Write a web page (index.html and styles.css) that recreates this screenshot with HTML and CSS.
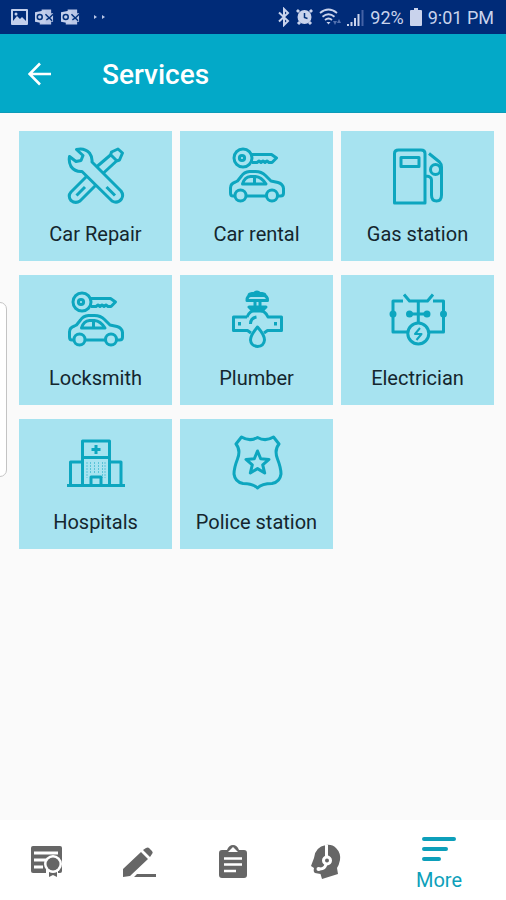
FILE: index.html
```html
<!DOCTYPE html>
<html lang="en">
<head>
<meta charset="utf-8">
<meta name="viewport" content="width=device-width, initial-scale=1">
<title>Services</title>
<link rel="stylesheet" href="styles.css">
</head>
<body>
<svg class="defs" aria-hidden="true">
  <symbol id="mail" viewBox="0 0 20 18">
    <path d="M7 1h10v4H7zM10 5h9v9h-9zM5 14h12v3H5z" fill="#b9c6e6"/>
    <path d="M0 4l11-2v14L0 14z" fill="#c3cfeb"/>
    <circle cx="5" cy="9" r="2.6" fill="none" stroke="#02307a" stroke-width="1.6"/>
    <path d="M11 6l4 4 4-4M12 12l3-2 3 3" fill="none" stroke="#02307a" stroke-width="1.5"/>
  </symbol>
  <symbol id="car-key" viewBox="0 0 60 60">
    <circle cx="16" cy="12" r="9"/>
    <circle cx="15" cy="12" r="2.6"/>
    <path d="M25 8.5h19.500l5 3.500-4.500 4.500h-3l-2-1.500-2 1.500-2-1.500-2 1.500-2-1.500-2 1.500h-5"/>
    <path d="M8 50H6q-2.500 0-2.500-3v-5q0-4.500 5-6l2-1 4-5q2.500-4 8-4.500h6q6 0 10 4l5.500 5.500 7 1.500q5 1.500 5.500 6v4.500q0 3-3 3h-2.500M19 50h20.500"/>
    <path d="M15.500 38q2-7 8-7.500h5q6 .5 10.500 7.500zM27.500 31v7"/>
    <circle cx="13.500" cy="49.500" r="5.500"/>
    <circle cx="45" cy="49.500" r="5.500"/>
  </symbol>
</svg>

<div class="status">
  <div class="status-group notices">
    <svg width="17" height="16" viewBox="0 0 17 16" aria-hidden="true"><path fill="#c3cfeb" fill-rule="evenodd" d="M1 0h15q1 0 1 1v14q0 1-1 1H1q-1 0-1-1V1q0-1 1-1zM2 2v10l4-5 3 3 2-2 4 4V2z"/><circle cx="5" cy="5" r="1.500" fill="#c3cfeb"/></svg>
    <svg width="19" height="18" aria-hidden="true"><use href="#mail"/></svg>
    <svg width="19" height="18" aria-hidden="true"><use href="#mail"/></svg>
    <svg class="dots" width="12" height="4" viewBox="0 0 12 4" aria-hidden="true"><path d="M1 0l3 2-3 2zM9 0l3 2-3 2z" fill="#b9c6e6"/></svg>
  </div>
  <div class="status-group system">
    <svg width="12" height="20" viewBox="0 0 12 20" aria-hidden="true"><path d="M1 5.500l9 8.500-4 4V2l4 4-9 8.500" fill="none" stroke="#c9d3ec" stroke-width="2"/></svg>
    <svg width="17" height="18" viewBox="0 0 17 18" aria-hidden="true"><path d="M3 2l-2 2M14 2l2 2M4 14l-2 2M13 14l2 2" stroke="#c9d3ec" stroke-width="3"/><circle cx="8.500" cy="9" r="7" fill="#c9d3ec"/><path d="M8.500 5v4.500l3 1" fill="none" stroke="#02307a" stroke-width="1.500"/></svg>
    <svg width="22" height="18" viewBox="0 0 22 18" aria-hidden="true"><g fill="none" stroke="#c9d3ec" stroke-width="1.800"><path d="M1 5q8.500-7 17 0M3.500 8.700q6-5 12 0M6 12q3.500-3 7 0"/></g><path d="M9.500 16.500l-2-2.500h4z" fill="#c9d3ec"/><path d="M14 13l2 4 2-4zM18 15l2-4 2 4z" fill="#5371ae"/></svg>
    <svg width="17" height="17" viewBox="0 0 17 17" aria-hidden="true"><path d="M1 17v-2M4.500 17v-4M8 17V9M11.500 17V5" stroke="#c9d3ec" stroke-width="2"/><path d="M15.500 17V1" stroke="#4462a5" stroke-width="2"/></svg>
    <span>92%</span>
    <svg class="battery" width="12" height="18" viewBox="0 0 12 18" aria-hidden="true"><path d="M4 0h4v2h3q1 0 1 1v14q0 1-1 1H1q-1 0-1-1V3q0-1 1-1h3z" fill="#c9d3ec"/></svg>
    <span>9:01 PM</span>
  </div>
</div>

<header class="app-bar">
  <button class="back" type="button" aria-label="Back">
    <svg width="24" height="24" viewBox="0 0 24 24"><path d="M23 12H2M12 1.500L1.500 12 12 22.500" fill="none" stroke="#fff" stroke-width="2.600"/></svg>
  </button>
  <h1>Services</h1>
</header>

<main class="content">
  <nav class="grid" aria-label="Services">
    <a class="tile" href="#car-repair">
      <svg class="icon" viewBox="0 0 60 60"><path d="M10.500 3.500q8-2 13 3.500 3 4 2.500 9L55 45q3 4 .5 8-4 5-9.500 2L16 25.500q-7 .5-11-5-2.500-4.500-1.500-10l6.500 5 5-1 2-5z"/><path d="M31 20.500L44.500 9l1-3L52 3l4.500 4-3 7-3 1L37.500 27M45 9l6 6M21 30L5 46q-3.500 4 0 8.500 4.500 3.500 9 .5L30 39M10.500 49.500L19 41M40.500 41l8.500 8.500"/></svg>
      <span>Car Repair</span>
    </a>
    <a class="tile" href="#car-rental">
      <svg class="icon"><use href="#car-key"/></svg>
      <span>Car rental</span>
    </a>
    <a class="tile" href="#gas-station">
      <svg class="icon" viewBox="0 0 60 60"><path d="M6.500 57V7.500q0-3.500 4-3.500H33q4 0 4 3.500V57zM13 11.500h18v9H13zM41 7.500L51.500 16q2 2 2 5v28q0 6-5 6t-5-6V34q0-3.500-5.500-4"/><circle cx="47.500" cy="23.500" r="5"/></svg>
      <span>Gas station</span>
    </a>
    <a class="tile" href="#locksmith">
      <svg class="icon"><use href="#car-key"/></svg>
      <span>Locksmith</span>
    </a>
    <a class="tile" href="#plumber">
      <svg class="icon" viewBox="0 0 60 60"><path d="M22 5q0-1 3-1.500h2q3-3 6 0h2q3 .5 3 1.500z" class="solid"/><path d="M20 10.500q0-5 4-5h12.500q4 0 4 5zM28 11v6M33 11v6"/><path d="M22 17h17l-4 4H26z" class="solid"/><path d="M20 27q3-7 10.500-7T41 27h13.500v13.500H40.500L37 43M24 43l-3.500-2.500H6.500V27H20M23.500 34q0-6 6-7M12.500 32v3.500M48.500 32v3.500"/><path d="M30.500 37q-7 8-7 13 .5 6 7 6.500 6.500-.5 7-6.500 0-5-7-13z"/></svg>
      <span>Plumber</span>
    </a>
    <a class="tile" href="#electrician">
      <svg class="icon" viewBox="0 0 60 60"><path d="M15 11H5v31h15M45 11h10.500v31H40.500M16 4.500l5.500 6.500h18L45 4.500M30.300 11v22M21 24h18.500"/><circle cx="30.300" cy="43.500" r="10.500"/><g class="solid"><circle cx="5" cy="24" r="2"/><circle cx="55.500" cy="24" r="2"/><circle cx="21.500" cy="24" r="2"/><circle cx="39" cy="24" r="2"/></g><path d="M32 38l-5 6h6.500l-5 6" class="thin"/></svg>
      <span>Electrician</span>
    </a>
    <a class="tile" href="#hospitals">
      <svg class="icon" viewBox="0 0 60 60"><path d="M1 51.500h58M4.500 51V28h12M55 51V28H43.500M16.500 51V7h27v44M16.500 23.500h27M25 51v-8h10v8M30 11v9M25.500 15.500h9"/><path d="M21 28v16M24.500 28v12M28.500 28v12M32.500 28v12M36.500 28v16M39 28v16" class="windows"/></svg>
      <span>Hospitals</span>
    </a>
    <a class="tile" href="#police-station">
      <svg class="icon" viewBox="0 0 60 60"><path d="M14.500 3q8 5 16 .5 8 4.500 16 -.5l5.500 7q-5 6-1.500 15 3.500 9 3.500 15-1 8-9 9.500-10 0-14.500 4.500-4.500-4.500-14.500-4.500-8-1.500-9-9.500 0-6 3.500-15 3.500-9-1.500-15z"/><path d="M30.500 17l3.200 7.800 8.300.6-6.300 5.500 2 8.100-7.200-4.400-7.200 4.400 2-8.100-6.300-5.500 8.300-.6z"/></svg>
      <span>Police station</span>
    </a>
  </nav>
</main>
<div class="edge-handle"></div>

<nav class="tabs" aria-label="Main">
  <a class="tab" href="#certificates" aria-label="Certificates">
    <svg width="36" height="36" viewBox="0 0 36 36"><path fill="#666" d="M4 2h27q2 0 2 2v23q0 2-2 2H4q-2 0-2-2V4q0-2 2-2z"/><path d="M5 9h24M5 16h14M5 23h9" stroke="#fff" stroke-width="3"/><path d="M17 23h12v11H17z" fill="#fff"/><circle cx="24" cy="20" r="9" fill="#fff"/><circle cx="24" cy="20" r="6.500" fill="#666"/><path d="M20 28q4 2 8 0v5l-4-2-4 2z" fill="#666"/></svg>
  </a>
  <a class="tab" href="#edit" aria-label="Edit">
    <svg width="36" height="36" viewBox="0 0 36 36"><path fill="#666" d="M1 33v-8L19 8l7 7L8 32zM21 6l3-2q2-1 3 0l3 3q1.500 2 0 3l-2 3zM15 30h19v3H12z"/></svg>
  </a>
  <a class="tab" href="#tasks" aria-label="Tasks">
    <svg width="36" height="36" viewBox="0 0 36 36"><path fill="#666" d="M7 6h5q2-5 6-5t6 5h5q3 0 3 3v22q0 3-3 3H7q-3 0-3-3V9q0-3 3-3z"/><path fill="#fff" d="M18 3l5 5H13z"/><path d="M9 14.500h18M9 20.500h18M9 27h12" stroke="#fff" stroke-width="2.500"/></svg>
  </a>
  <a class="tab" href="#support" aria-label="Support">
    <svg width="36" height="36" viewBox="0 0 36 36"><path fill="#666" d="M18 1q6-1 10 3 5 5 4 12-1 5-3 8l1 6-16 5-1.500-5-5.500-1q-2-1-1-5l-3-2 3-8Q7 3 18 1z"/><g fill="none" stroke="#fff" stroke-width="3"><path d="M18.500 1v11"/><circle cx="19" cy="16.500" r="3.500"/><path d="M18 20q-1 5-6 5h-2"/></g><circle cx="10.500" cy="25" r="2" fill="#fff"/></svg>
  </a>
  <a class="tab tab-active" href="#more" aria-current="page">
    <svg width="34" height="26" viewBox="0 0 34 26"><path d="M2 3h30M2 13h22M2 23h15" fill="none" stroke="#0d9fba" stroke-width="4" stroke-linecap="round"/></svg>
    <span>More</span>
  </a>
</nav>
</body>
</html>
```

FILE: styles.css
```css
* {
  box-sizing: border-box;
}

body {
  margin: 0;
  min-height: 100vh;
  display: flex;
  flex-direction: column;
  background: #fafafa;
  color: #14262e;
  font-family: Roboto, "Liberation Sans", sans-serif;
}

a {
  color: inherit;
  text-decoration: none;
}

svg {
  display: block;
  flex: none;
}

.defs {
  position: absolute;
  width: 0;
  height: 0;
}

.status {
  height: 34px;
  padding: 0 12px 0 11px;
  display: flex;
  align-items: center;
  justify-content: space-between;
  background: #002b78;
  color: #c9d3ec;
  font-size: 18px;
}

.status-group {
  display: flex;
  align-items: center;
}

.notices {
  gap: 7px;
}

.dots {
  margin-left: 6px;
}

.system {
  gap: 6px;
}

.app-bar {
  height: 79px;
  padding: 2px 28px 0;
  display: flex;
  align-items: center;
  gap: 50px;
  background: #03a9c8;
  border-bottom: 1px solid #0c9bb8;
  color: #fff;
}

.back {
  padding: 0;
  border: 0;
  background: none;
}

h1 {
  margin: 0;
  font-size: 28px;
  font-weight: 500;
}

.content {
  flex: 1;
  padding: 18px 12px 18px 19px;
}

.grid {
  display: grid;
  grid-template-columns: repeat(3, 1fr);
  gap: 14px 8px;
}

.tile {
  height: 130px;
  padding-top: 15px;
  display: flex;
  flex-direction: column;
  align-items: center;
  gap: 16px;
  background: #a7e3f0;
  font-size: 20px;
  line-height: 24px;
}

.icon {
  width: 60px;
  height: 60px;
  fill: none;
  stroke: #0da6bf;
  stroke-width: 3;
  stroke-linejoin: round;
}

.solid {
  fill: #0da6bf;
}

.thin {
  stroke-width: 2;
}

.windows {
  stroke-width: 1;
  stroke-dasharray: 2 1;
  opacity: 0.5;
}

.edge-handle {
  position: fixed;
  left: -8px;
  top: 302px;
  width: 15px;
  height: 175px;
  background: #fff;
  border: 1px solid #c4c4c4;
  border-radius: 7px;
}

.tabs {
  height: 80px;
  padding-top: 3px;
  display: flex;
  background: #fff;
}

.tab {
  flex: 93;
  display: flex;
  flex-direction: column;
  align-items: center;
  justify-content: center;
}

.tab-active {
  flex: 134;
  gap: 6px;
  padding-top: 4px;
  color: #0d9fba;
  font-size: 20px;
  line-height: 24px;
}
```
